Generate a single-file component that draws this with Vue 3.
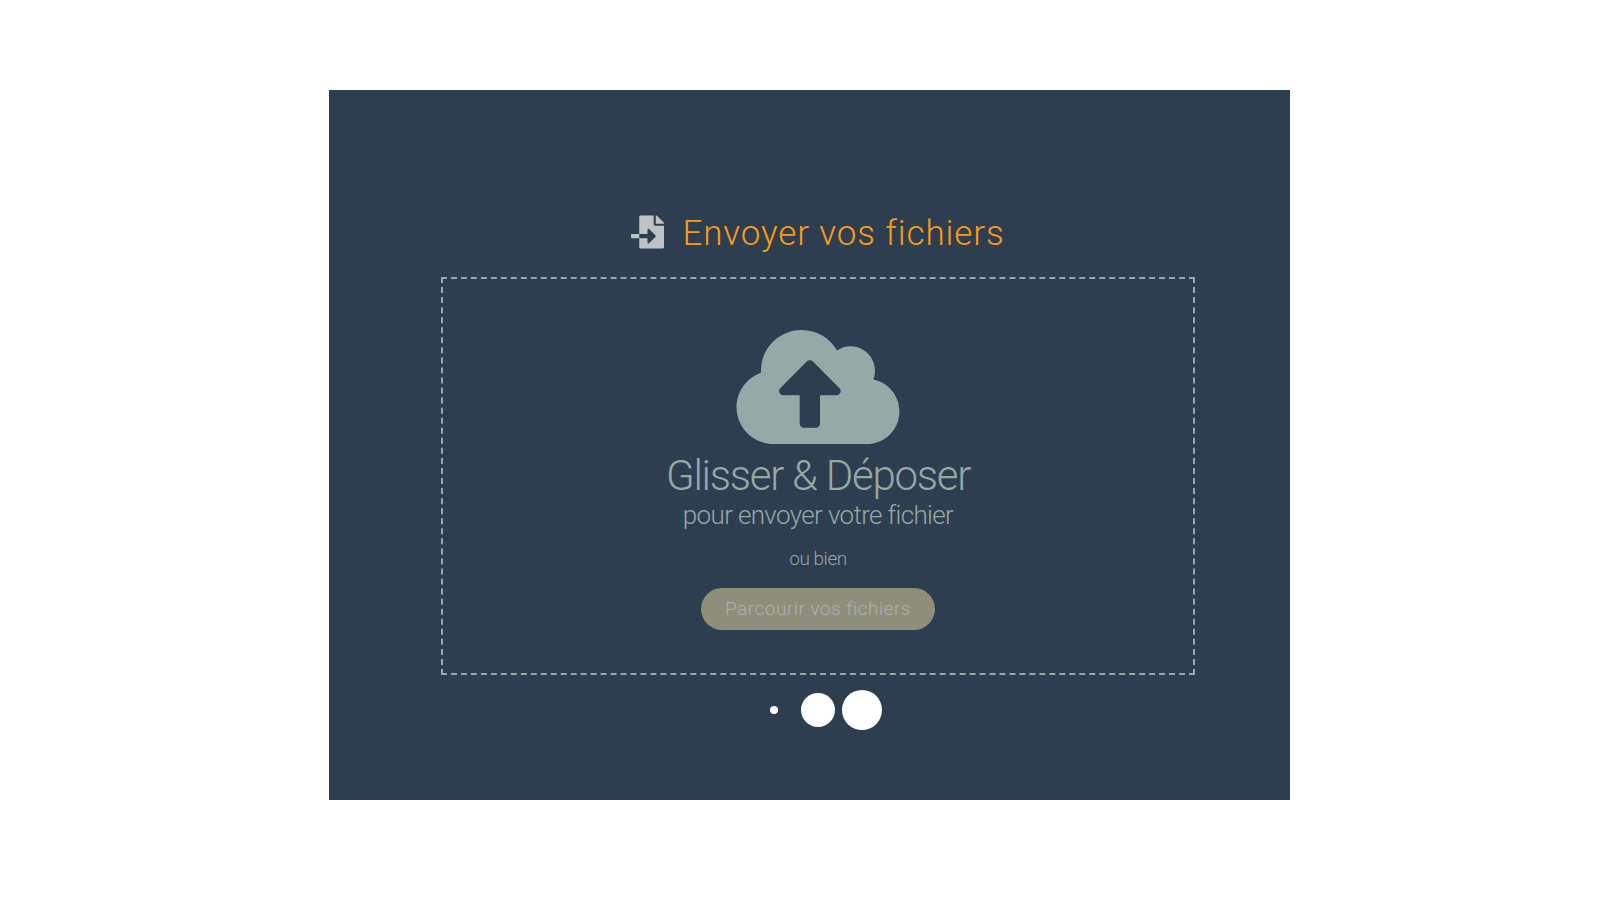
<script setup>
const dots = ['small', 'medium', 'large']
</script>

<template>
  <main class="page">
    <section class="panel">
      <h1 class="title">
        <svg class="title-icon" viewBox="0 0 512 512" aria-hidden="true">
          <path d="M16 288c-8.800 0-16 7.200-16 16v32c0 8.800 7.200 16 16 16h112v-64zm489-183L407.100 7c-4.500-4.500-10.600-7-17-7H384v128h128v-6.100c0-6.300-2.500-12.400-7-16.900zm-153 31V0H152c-13.300 0-24 10.700-24 24v264h128v-65.200c0-14.300 17.300-21.400 27.400-11.300L379 308c6.600 6.700 6.600 17.400 0 24l-95.700 96.400c-10.100 10.100-27.400 3-27.400-11.300V352H128v136c0 13.300 10.700 24 24 24h336c13.300 0 24-10.700 24-24V160H376c-13.200 0-24-10.800-24-24z" />
        </svg>
        <span>Envoyer vos fichiers</span>
      </h1>

      <div class="dropzone">
        <svg class="cloud" viewBox="0 32 640 448" aria-hidden="true">
          <path d="M537.600 226.600c4.100-10.700 6.400-22.400 6.400-34.600 0-53-43-96-96-96-19.700 0-38.100 6-53.300 16.200C367 64.200 315.300 32 256 32c-88.400 0-160 71.600-160 160 0 2.700.1 5.400.2 8.100C40.200 219.800 0 273.200 0 336c0 79.500 64.500 144 144 144h368c70.700 0 128-57.300 128-128 0-61.900-44-113.600-102.400-125.400zM393.400 288H328v112c0 8.800-7.200 16-16 16h-48c-8.800 0-16-7.200-16-16V288h-65.400c-14.300 0-21.400-17.200-11.300-27.400l105.400-105.400c6.200-6.200 16.400-6.200 22.600 0l105.400 105.400c10.100 10.200 2.900 27.400-11.300 27.400z" />
        </svg>
        <h2 class="headline">Glisser &amp; Déposer</h2>
        <p class="sub">pour envoyer votre fichier</p>
        <p class="or">ou bien</p>
        <button type="button" class="browse">Parcourir vos fichiers</button>
      </div>

      <div class="loader" role="status" aria-label="Chargement">
        <span v-for="d in dots" :key="d" class="slot"><i class="dot" :class="d"></i></span>
      </div>
    </section>
  </main>
</template>

<style>
body {
  background: #fff;
}
</style>

<style scoped>
.page {
  display: flex;
  padding: 90px 310px 100px 329px;
  font-family: Roboto, "Liberation Sans", sans-serif;
}
.panel {
  flex: 1;
  box-sizing: border-box;
  padding: 120px 95px 70px 112px;
  background: #2d3e50;
}
.title {
  display: flex;
  justify-content: center;
  align-items: flex-start;
  gap: 18px;
  margin: 0 0 19px;
  color: #fb9a16;
  font-size: 35px;
  font-weight: 300;
  line-height: 48px;
  letter-spacing: 0.025em;
}
.title-icon {
  width: 33px;
  height: 34px;
  margin-top: 5px;
  fill: #bdc3c7;
}
.dropzone {
  display: flex;
  flex-direction: column;
  align-items: center;
  padding: 51px 20px 43px;
  border: 2px dashed #95a9a6;
  color: #95a9a6;
}
.cloud {
  width: 164px;
  height: 114px;
  fill: #95a9a6;
}
.headline,
.sub,
.or {
  margin: 0;
  font-weight: 300;
  letter-spacing: -0.025em;
}
.headline {
  margin-top: 8px;
  font-size: 42px;
  line-height: 48px;
  letter-spacing: -0.03em;
}
.sub {
  font-size: 26px;
  line-height: 30px;
}
.or {
  margin: 15px 0;
  font-size: 19px;
  line-height: 28px;
}
.browse {
  height: 42px;
  padding: 0 24px 2px;
  border: 0;
  border-radius: 21px;
  background: #8f8e7b;
  color: #abb0b3;
  font-family: inherit;
  font-size: 19px;
  font-weight: 300;
  letter-spacing: 0.025em;
}
.loader {
  display: flex;
  justify-content: center;
  gap: 4px;
  margin-top: 15px;
}
.slot {
  display: flex;
  justify-content: center;
  align-items: center;
  width: 40px;
  height: 40px;
}
.dot {
  border-radius: 50%;
  background: #fff;
}
.small {
  width: 8px;
  height: 8px;
}
.medium {
  width: 34px;
  height: 34px;
}
.large {
  width: 40px;
  height: 40px;
}
</style>
